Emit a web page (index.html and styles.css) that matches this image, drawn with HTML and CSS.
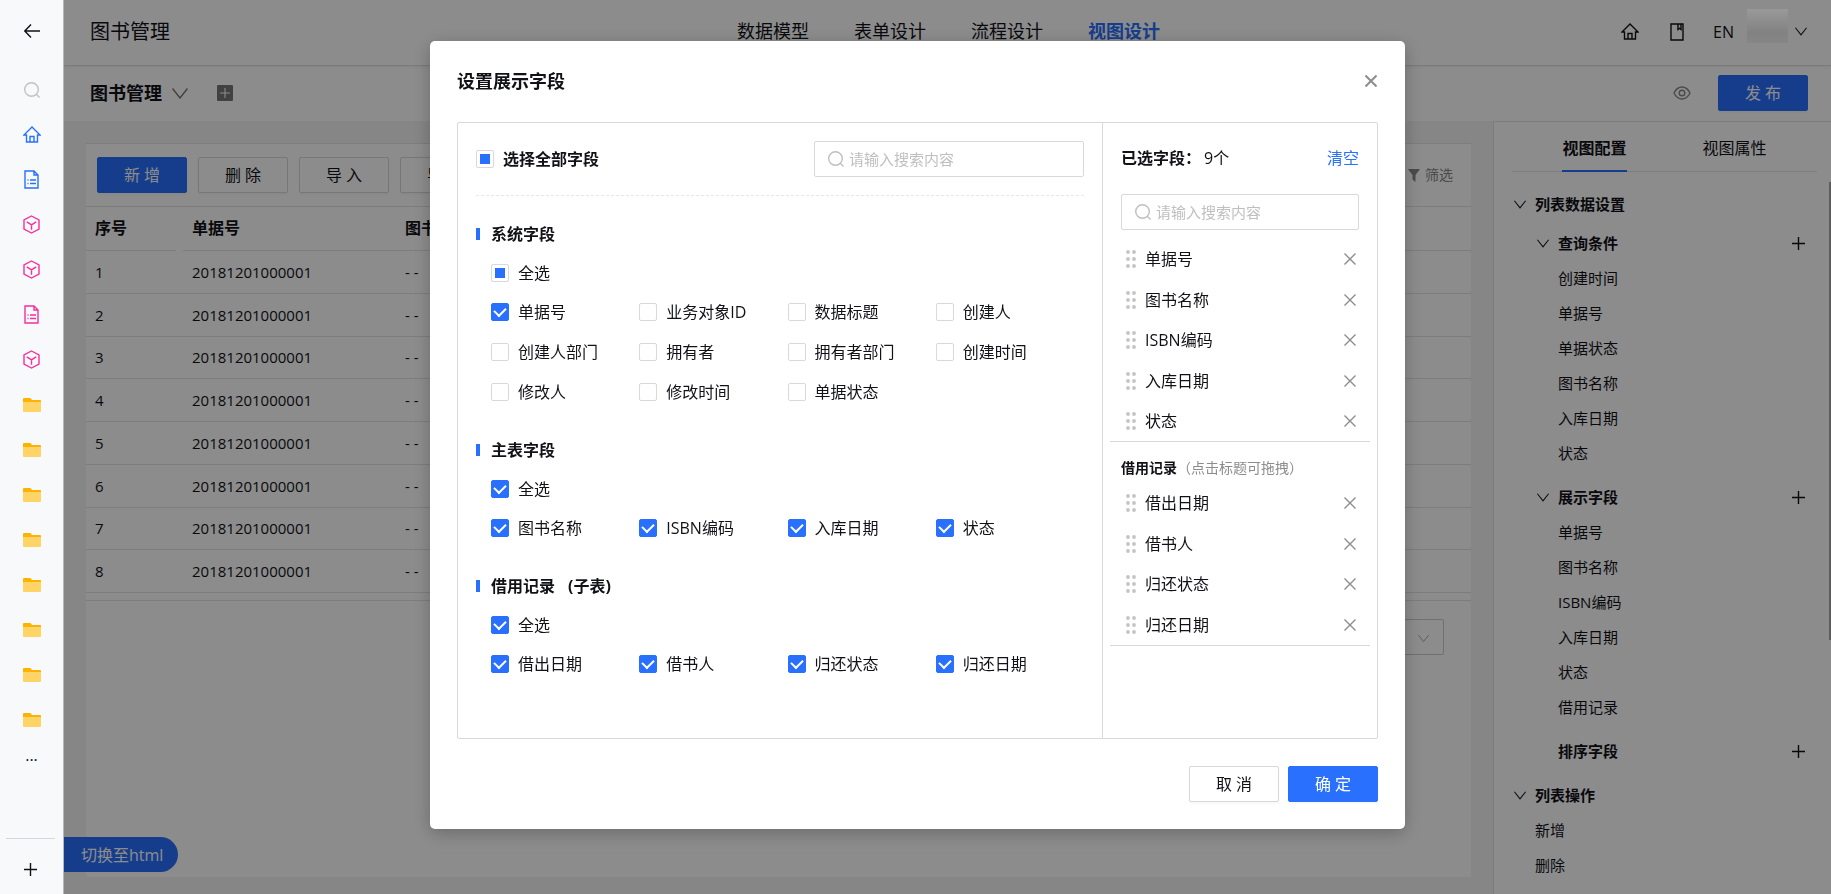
FILE: index.html
```
<!DOCTYPE html>
<html lang="zh-CN">
<head>
    <meta charset="UTF-8">
    <meta name="viewport" content="width=device-width, initial-scale=1.0">
    <title>图书管理</title>
    <link rel="stylesheet" href="styles.css">
</head>
<body>
    <svg class="symbols" aria-hidden="true">
        <symbol id="i-back" viewBox="0 0 16 14"><path d="M16 7H1M7 .5L.8 7 7 13.500"/></symbol>
        <symbol id="i-search" viewBox="0 0 16 16"><circle cx="7.500" cy="7.500" r="6.800"/><path d="M12.500 12.500l3 3"/></symbol>
        <symbol id="i-home" viewBox="0 0 18 17"><path d="M1 9l8-8 8 8h-2.500v7h-11V9zM7 16v-5.500h4V16"/></symbol>
        <symbol id="i-doc" viewBox="0 0 15 19"><path d="M1 1h9l4 4v13H1zM10 1v4h4M3.500 10h1M6 10h6M3.500 13.500h1M6 13.500h6"/></symbol>
        <symbol id="i-cube" viewBox="0 0 17 19"><path d="M8.500 1l7.500 4v9l-7.500 4L1 14V5zM3.800 6.800l4.700 3 4.700-3M8.500 9.800v5"/></symbol>
        <symbol id="i-folder" viewBox="0 0 18 14"><path d="M0 1q0-1 1-1h6.500l1.500 2h8q1 0 1 1v3H0z" fill="#ffb300" stroke="none"/><path d="M0 4h18v9q0 1-1 1H1q-1 0-1-1z" fill="#ffd466" stroke="none"/></symbol>
        <symbol id="i-plus" viewBox="0 0 13 13"><path d="M6.500 0v13M0 6.500h13"/></symbol>
        <symbol id="i-down" viewBox="0 0 16 11"><path d="M.5.500L8 10l7.500-9.500"/></symbol>
        <symbol id="i-book" viewBox="0 0 14 18"><path d="M1 1h12v16H1zM8 1v5.500l1.500-1.200L11 6.500V1"/></symbol>
        <symbol id="i-eye" viewBox="0 0 18 14"><path d="M1 7c4-8 12-8 16 0-4 8-12 8-16 0z"/><circle cx="9" cy="7" r="2.800"/></symbol>
        <symbol id="i-filter" viewBox="0 0 12 13"><path d="M0 0h12L7.500 6v7l-3-2.500V6z" fill="currentColor" stroke="none"/></symbol>
        <symbol id="i-close" viewBox="0 0 12 12"><path d="M.5.500l11 11M11.500.500l-11 11"/></symbol>
        <symbol id="i-grip" viewBox="0 0 10 18"><g fill="#c4c4c4" stroke="none"><circle cx="2" cy="2" r="1.900"/><circle cx="8" cy="2" r="1.900"/><circle cx="2" cy="9" r="1.900"/><circle cx="8" cy="9" r="1.900"/><circle cx="2" cy="16" r="1.900"/><circle cx="8" cy="16" r="1.900"/></g></symbol>
    </svg>

    <aside class="sidebar">
        <button class="side-item back" aria-label="返回"><svg width="16" height="14"><use href="#i-back"/></svg></button>
        <button class="side-item find" aria-label="搜索"><svg width="16" height="16"><use href="#i-search"/></svg></button>
        <a href="#" class="side-item blue"><svg width="18" height="17"><use href="#i-home"/></svg></a>
        <a href="#" class="side-item blue"><svg width="15" height="19"><use href="#i-doc"/></svg></a>
        <a href="#" class="side-item pink"><svg width="17" height="19"><use href="#i-cube"/></svg></a>
        <a href="#" class="side-item pink"><svg width="17" height="19"><use href="#i-cube"/></svg></a>
        <a href="#" class="side-item pink"><svg width="15" height="19"><use href="#i-doc"/></svg></a>
        <a href="#" class="side-item pink"><svg width="17" height="19"><use href="#i-cube"/></svg></a>
        <a href="#" class="side-item"><svg width="18" height="14"><use href="#i-folder"/></svg></a>
        <a href="#" class="side-item"><svg width="18" height="14"><use href="#i-folder"/></svg></a>
        <a href="#" class="side-item"><svg width="18" height="14"><use href="#i-folder"/></svg></a>
        <a href="#" class="side-item"><svg width="18" height="14"><use href="#i-folder"/></svg></a>
        <a href="#" class="side-item"><svg width="18" height="14"><use href="#i-folder"/></svg></a>
        <a href="#" class="side-item"><svg width="18" height="14"><use href="#i-folder"/></svg></a>
        <a href="#" class="side-item"><svg width="18" height="14"><use href="#i-folder"/></svg></a>
        <a href="#" class="side-item"><svg width="18" height="14"><use href="#i-folder"/></svg></a>
        <button class="side-item more">...</button>
        <button class="side-item side-add" aria-label="添加"><svg width="13" height="13"><use href="#i-plus"/></svg></button>
    </aside>

    <div class="app">
        <header class="header">
            <h1 class="app-name">图书管理</h1>
            <nav class="nav">
                <a href="#">数据模型</a>
                <a href="#">表单设计</a>
                <a href="#">流程设计</a>
                <a href="#" class="active">视图设计</a>
            </nav>
            <div class="user">
                <svg width="18" height="17"><use href="#i-home"/></svg>
                <svg class="book" width="14" height="18"><use href="#i-book"/></svg>
                <span class="lang">EN</span>
                <span class="avatar"></span>
                <svg width="12" height="9"><use href="#i-down"/></svg>
            </div>
        </header>

        <div class="subheader">
            <h2>图书管理</h2>
            <svg class="switch" width="16" height="11"><use href="#i-down"/></svg>
            <button class="add-view" aria-label="新建视图"><svg width="10" height="10"><use href="#i-plus"/></svg></button>
            <svg class="preview" width="18" height="14"><use href="#i-eye"/></svg>
            <button class="btn primary">发 布</button>
        </div>

        <div class="workspace">
            <main class="card">
                <div class="toolbar">
                    <button class="btn primary">新 增</button>
                    <button class="btn">删 除</button>
                    <button class="btn">导 入</button>
                    <button class="btn">导 出</button>
                    <span class="filter"><svg width="12" height="13"><use href="#i-filter"/></svg>筛选</span>
                </div>
                <table class="grid">
                    <thead>
                        <tr><th class="col-no">序号</th><th class="col-code">单据号</th><th>图书名称</th></tr>
                    </thead>
                    <tbody>
                        <tr><td>1</td><td>20181201000001</td><td>- -</td></tr>
                        <tr><td>2</td><td>20181201000001</td><td>- -</td></tr>
                        <tr><td>3</td><td>20181201000001</td><td>- -</td></tr>
                        <tr><td>4</td><td>20181201000001</td><td>- -</td></tr>
                        <tr><td>5</td><td>20181201000001</td><td>- -</td></tr>
                        <tr><td>6</td><td>20181201000001</td><td>- -</td></tr>
                        <tr><td>7</td><td>20181201000001</td><td>- -</td></tr>
                        <tr><td>8</td><td>20181201000001</td><td>- -</td></tr>
                    </tbody>
                </table>
                <div class="pager">
                    <button class="page-size" aria-label="每页条数"><svg width="11" height="9"><use href="#i-down"/></svg></button>
                </div>
            </main>

            <section class="config">
                <div class="tabs">
                    <a href="#" class="active">视图配置</a>
                    <a href="#">视图属性</a>
                </div>
                <div class="tree">
                    <h3><svg width="12" height="9"><use href="#i-down"/></svg>列表数据设置</h3>
                    <div class="group first">
                        <h4><svg width="12" height="9"><use href="#i-down"/></svg>查询条件<button aria-label="添加"><svg width="13" height="13"><use href="#i-plus"/></svg></button></h4>
                        <ul>
                            <li>创建时间</li>
                            <li>单据号</li>
                            <li>单据状态</li>
                            <li>图书名称</li>
                            <li>入库日期</li>
                            <li>状态</li>
                        </ul>
                    </div>
                    <div class="group">
                        <h4><svg width="12" height="9"><use href="#i-down"/></svg>展示字段<button aria-label="添加"><svg width="13" height="13"><use href="#i-plus"/></svg></button></h4>
                        <ul>
                            <li>单据号</li>
                            <li>图书名称</li>
                            <li>ISBN编码</li>
                            <li>入库日期</li>
                            <li>状态</li>
                            <li>借用记录</li>
                        </ul>
                    </div>
                    <div class="group">
                        <h4 class="leaf">排序字段<button aria-label="添加"><svg width="13" height="13"><use href="#i-plus"/></svg></button></h4>
                    </div>
                    <div class="group actions">
                        <h3><svg width="12" height="9"><use href="#i-down"/></svg>列表操作</h3>
                        <ul>
                            <li>新增</li>
                            <li>删除</li>
                            <li>导入</li>
                        </ul>
                    </div>
                </div>
                <span class="scroll-thumb"></span>
            </section>
        </div>
        <button class="to-html">切换至html</button>
    </div>

    <div class="mask">
        <div class="modal" role="dialog" aria-labelledby="modal-title">
            <div class="modal-header">
                <h2 id="modal-title">设置展示字段</h2>
                <button class="icon-btn modal-close" aria-label="关闭"><svg width="12" height="12"><use href="#i-close"/></svg></button>
            </div>

            <div class="modal-body">
                <div class="fields">
                    <div class="fields-top">
                        <label class="check strong"><input type="checkbox" class="partial">选择全部字段</label>
                        <label class="search"><svg width="16" height="16"><use href="#i-search"/></svg><input type="text" placeholder="请输入搜索内容" aria-label="搜索字段"></label>
                    </div>

                    <section class="field-group">
                        <h3>系统字段</h3>
                        <label class="check all"><input type="checkbox" class="partial">全选</label>
                        <div class="options">
                            <label class="check"><input type="checkbox" checked>单据号</label>
                            <label class="check"><input type="checkbox">业务对象ID</label>
                            <label class="check"><input type="checkbox">数据标题</label>
                            <label class="check"><input type="checkbox">创建人</label>
                            <label class="check"><input type="checkbox">创建人部门</label>
                            <label class="check"><input type="checkbox">拥有者</label>
                            <label class="check"><input type="checkbox">拥有者部门</label>
                            <label class="check"><input type="checkbox">创建时间</label>
                            <label class="check"><input type="checkbox">修改人</label>
                            <label class="check"><input type="checkbox">修改时间</label>
                            <label class="check"><input type="checkbox">单据状态</label>
                        </div>
                    </section>

                    <section class="field-group">
                        <h3>主表字段</h3>
                        <label class="check all"><input type="checkbox" checked>全选</label>
                        <div class="options">
                            <label class="check"><input type="checkbox" checked>图书名称</label>
                            <label class="check"><input type="checkbox" checked>ISBN编码</label>
                            <label class="check"><input type="checkbox" checked>入库日期</label>
                            <label class="check"><input type="checkbox" checked>状态</label>
                        </div>
                    </section>

                    <section class="field-group">
                        <h3>借用记录 <span class="sub">(子表)</span></h3>
                        <label class="check all"><input type="checkbox" checked>全选</label>
                        <div class="options">
                            <label class="check"><input type="checkbox" checked>借出日期</label>
                            <label class="check"><input type="checkbox" checked>借书人</label>
                            <label class="check"><input type="checkbox" checked>归还状态</label>
                            <label class="check"><input type="checkbox" checked>归还日期</label>
                        </div>
                    </section>
                </div>

                <div class="selected">
                    <div class="selected-top">
                        <strong>已选字段：</strong>
                        <span>9个</span>
                        <a href="#">清空</a>
                    </div>
                    <label class="search"><svg width="16" height="16"><use href="#i-search"/></svg><input type="text" placeholder="请输入搜索内容" aria-label="搜索已选字段"></label>
                    <ul class="picked">
                        <li><svg width="10" height="18"><use href="#i-grip"/></svg>单据号<button class="icon-btn" aria-label="移除"><svg width="12" height="12"><use href="#i-close"/></svg></button></li>
                        <li><svg width="10" height="18"><use href="#i-grip"/></svg>图书名称<button class="icon-btn" aria-label="移除"><svg width="12" height="12"><use href="#i-close"/></svg></button></li>
                        <li><svg width="10" height="18"><use href="#i-grip"/></svg>ISBN编码<button class="icon-btn" aria-label="移除"><svg width="12" height="12"><use href="#i-close"/></svg></button></li>
                        <li><svg width="10" height="18"><use href="#i-grip"/></svg>入库日期<button class="icon-btn" aria-label="移除"><svg width="12" height="12"><use href="#i-close"/></svg></button></li>
                        <li><svg width="10" height="18"><use href="#i-grip"/></svg>状态<button class="icon-btn" aria-label="移除"><svg width="12" height="12"><use href="#i-close"/></svg></button></li>
                    </ul>
                    <p class="picked-title"><strong>借用记录</strong>（点击标题可拖拽）</p>
                    <ul class="picked">
                        <li><svg width="10" height="18"><use href="#i-grip"/></svg>借出日期<button class="icon-btn" aria-label="移除"><svg width="12" height="12"><use href="#i-close"/></svg></button></li>
                        <li><svg width="10" height="18"><use href="#i-grip"/></svg>借书人<button class="icon-btn" aria-label="移除"><svg width="12" height="12"><use href="#i-close"/></svg></button></li>
                        <li><svg width="10" height="18"><use href="#i-grip"/></svg>归还状态<button class="icon-btn" aria-label="移除"><svg width="12" height="12"><use href="#i-close"/></svg></button></li>
                        <li><svg width="10" height="18"><use href="#i-grip"/></svg>归还日期<button class="icon-btn" aria-label="移除"><svg width="12" height="12"><use href="#i-close"/></svg></button></li>
                    </ul>
                </div>
            </div>

            <div class="modal-footer">
                <button class="btn">取 消</button>
                <button class="btn primary">确 定</button>
            </div>
        </div>
    </div>

    <script>
        document.querySelectorAll(".partial").forEach(function (box) {
            box.indeterminate = true;
        });
    </script>
</body>
</html>
```
FILE: styles.css
```
* {
    box-sizing: border-box;
}
body {
    display: flex;
    height: 100vh;
    margin: 0;
    overflow: hidden;
    font-family: "Open Sans", "Noto Sans CJK SC", sans-serif;
    font-size: 16px;
    line-height: 24px;
    color: #111218;
    background-color: #f4f4f4;
}
h1, h2, h3, h4, p, ul {
    margin: 0;
    padding: 0;
}
ul {
    list-style: none;
}
a {
    color: inherit;
    text-decoration: none;
}
button, input {
    font: inherit;
    color: inherit;
}
button {
    padding: 0;
    border: none;
    background: none;
    cursor: pointer;
}
svg {
    flex: none;
    fill: none;
    stroke: currentColor;
    stroke-width: 1.4;
    overflow: visible;
}
.symbols {
    position: absolute;
    width: 0;
    height: 0;
}
.btn {
    width: 90px;
    height: 36px;
    padding-bottom: 1px;
    border: 1px solid #d9d9d9;
    border-radius: 2px;
    background-color: #fff;
    box-shadow: 0 2px 2px rgba(0, 0, 0, 0.03);
}
.btn.primary {
    color: #fff;
    border-color: #2970ff;
    background-color: #2970ff;
}

/* sidebar */
.sidebar {
    position: relative;
    z-index: 20;
    display: flex;
    flex-direction: column;
    flex: none;
    width: 64px;
    padding-top: 8px;
    background-color: #f7f9fb;
    border-right: 1px solid #b4b6b8;
}
.side-item {
    display: flex;
    align-items: center;
    justify-content: center;
    flex: none;
    height: 45px;
}
.side-item.find {
    margin-top: 14px;
    color: #c0c2c4;
}
.side-item.blue {
    color: #2970ff;
}
.side-item.pink {
    color: #f5319d;
}
.side-item.more {
    height: 26px;
}
.side-item.side-add {
    height: 56px;
    margin: auto 8px 0 6px;
    padding-top: 6px;
    border-top: 1px solid #d5d7da;
}

/* page behind the dialog */
.app {
    display: flex;
    flex-direction: column;
    flex: 1;
    min-width: 0;
}
.header {
    position: relative;
    display: grid;
    grid-template-columns: 1fr auto 1fr;
    align-items: center;
    height: 66px;
    padding: 0 24px 2px 26px;
    background-color: #fff;
    border-bottom: 1px solid #dedede;
    box-shadow: 0 1px 3px rgba(0, 0, 0, 0.06);
}
.app-name {
    font-size: 20px;
    font-weight: 400;
}
.nav {
    display: flex;
    gap: 45px;
    padding-bottom: 2px;
    font-size: 18px;
}
.nav .active {
    font-weight: 700;
    color: #2970ff;
}
.user {
    display: flex;
    align-items: center;
    justify-content: flex-end;
}
.user .book {
    margin-left: 31px;
}
.lang {
    margin-left: 29px;
}
.avatar {
    position: relative;
    z-index: 15;
    width: 41px;
    height: 34px;
    margin: 0 7px 12px 13px;
    background: linear-gradient(#999, #828282 70%, #868686);
}
.subheader {
    display: flex;
    align-items: center;
    height: 55px;
    padding: 0 23px 1px 26px;
    background-color: #fff;
}
.subheader h2 {
    font-size: 18px;
}
.switch {
    margin-left: 10px;
    color: #777;
}
.add-view {
    display: flex;
    align-items: center;
    justify-content: center;
    width: 16px;
    height: 16px;
    margin-left: 29px;
    color: #fff;
    background-color: #777;
    border-radius: 1px;
}
.preview {
    margin: 0 27px 0 auto;
    color: #888;
}
.workspace {
    display: flex;
    flex: 1;
    min-height: 0;
}
.card {
    flex: 1;
    margin: 22px 22px 17px;
    background-color: #fff;
    border-top: 1px solid #e4e4e4;
}
.toolbar {
    display: flex;
    align-items: center;
    gap: 11px;
    height: 63px;
    padding: 0 18px 0 11px;
    border-bottom: 1px solid #e4e4e4;
}
.filter {
    display: flex;
    align-items: center;
    gap: 5px;
    margin-left: auto;
    font-size: 14px;
    color: #888;
}
.grid {
    width: 100%;
    height: 386px;
    border-spacing: 0;
    table-layout: fixed;
    font-size: 15px;
}
.grid th, .grid td {
    padding: 0 9px;
    text-align: left;
    border-bottom: 1px solid #e4e4e4;
}
.grid th {
    position: relative;
    height: 44px;
    padding-bottom: 2px;
    font-size: 16px;
}
.col-no {
    width: 97px;
}
.col-code {
    width: 213px;
}
.grid .col-no::after {
    content: "";
    position: absolute;
    right: 0;
    bottom: -1px;
    width: 7px;
    height: 1px;
    background-color: #fff;
}
.pager {
    display: flex;
    justify-content: flex-end;
    margin-top: 7px;
    padding: 18px 27px 0;
    border-top: 1px solid #e4e4e4;
}
.page-size {
    width: 90px;
    height: 36px;
    padding-right: 14px;
    text-align: right;
    color: #aaa;
    border: 1px solid #ccc;
    border-radius: 2px;
}
.config {
    position: relative;
    width: 338px;
    padding: 0 14px 0 18px;
    overflow: hidden;
    background-color: #fff;
    border-top: 1px solid #e4e4e4;
    border-left: 1px solid #e4e4e4;
}
.tabs {
    display: flex;
    justify-content: center;
    gap: 76px;
    height: 50px;
    border-bottom: 1px solid #e4e4e4;
    line-height: 52px;
}
.tabs .active {
    height: 50px;
    font-weight: 700;
    border-bottom: 2px solid #2970ff;
}
.tree {
    padding-top: 15px;
    font-size: 15px;
    line-height: 35px;
}
.tree h3, .tree h4 {
    display: flex;
    align-items: center;
    gap: 9px;
    font-size: 15px;
    padding-left: 2px;
}
.tree h4 {
    padding: 0 12px 0 25px;
}
.tree h4.leaf {
    padding-left: 46px;
}
.tree h4 button {
    display: flex;
    margin-left: auto;
}
.group {
    margin-top: 9px;
}
.group.first {
    margin-top: 4px;
}
.group ul {
    padding-left: 46px;
}
.group.actions ul {
    padding-left: 23px;
}
.scroll-thumb {
    position: absolute;
    top: 60px;
    right: 0;
    width: 2px;
    height: 458px;
    background-color: #aaa;
}
.to-html {
    position: absolute;
    bottom: 22px;
    left: 64px;
    height: 35px;
    padding: 0 15px 0 17px;
    color: #fff;
    background-color: #2970ff;
    border-radius: 0 18px 18px 0;
}

/* dialog */
.mask {
    position: fixed;
    inset: 0;
    z-index: 10;
    display: flex;
    align-items: flex-start;
    justify-content: center;
    padding: 41px 0 0 4px;
    background-color: rgba(0, 0, 0, 0.45);
}
.modal {
    width: 975px;
    padding: 0 27px 27px;
    background-color: #fff;
    border-radius: 5px;
    box-shadow: 0 4px 18px rgba(0, 0, 0, 0.25);
}
.modal-header {
    display: flex;
    align-items: center;
    justify-content: space-between;
    height: 81px;
    padding-bottom: 1px;
}
.modal-header h2 {
    font-size: 18px;
}
.icon-btn {
    display: flex;
    color: #8c8c8c;
}
.modal-close {
    margin-right: 1px;
}
.modal-close svg {
    stroke-width: 2;
}
.modal-body {
    display: flex;
    min-height: 617px;
    border: 1px solid #d9d9d9;
    border-radius: 2px;
}
.fields {
    flex: 1;
    padding: 0 18px;
}
.fields-top {
    display: flex;
    align-items: center;
    justify-content: space-between;
    height: 73px;
    margin-bottom: 18px;
    border-bottom: 1px dashed #e8e8e8;
}
.search {
    display: flex;
    align-items: center;
    gap: 5px;
    width: 270px;
    height: 36px;
    padding: 0 13px;
    border: 1px solid #d9d9d9;
    border-radius: 2px;
    color: #bfbfbf;
}
.search input {
    flex: 1;
    min-width: 0;
    padding: 0;
    font-size: 15px;
    color: #111218;
    border: none;
    outline: none;
    background: none;
}
.search input::placeholder {
    color: #bfbfbf;
}
.check {
    display: flex;
    align-items: center;
    gap: 9px;
}
.check.strong {
    font-weight: 700;
}
.check input {
    display: flex;
    align-items: center;
    justify-content: center;
    appearance: none;
    width: 18px;
    height: 18px;
    margin: 0;
    border: 1px solid #d9d9d9;
    border-radius: 2px;
    background-color: #fff;
}
.check input:checked {
    border-color: #2970ff;
    background-color: #2970ff;
}
.check input:checked::after {
    content: "";
    width: 6px;
    height: 9px;
    margin-bottom: 3px;
    border: solid #fff;
    border-width: 0 2px 2px 0;
    transform: rotate(45deg);
}
.check input:indeterminate::after {
    content: "";
    width: 10px;
    height: 10px;
    background-color: #2970ff;
}
.field-group {
    margin-bottom: 18px;
}
.field-group h3 {
    display: flex;
    align-items: center;
    height: 39px;
    font-size: 16px;
}
.field-group h3::before {
    content: "";
    width: 4px;
    height: 12px;
    margin-right: 11px;
    background-color: #2970ff;
}
.field-group .sub {
    margin-left: 13px;
}
.check.all {
    height: 39px;
    margin-left: 15px;
}
.options {
    display: grid;
    grid-template-columns: repeat(4, 1fr);
    grid-auto-rows: 40px;
    margin-left: 15px;
}
.selected {
    width: 275px;
    border-left: 1px solid #d9d9d9;
}
.selected-top {
    display: flex;
    padding: 23px 18px 24px;
}
.selected-top span {
    margin-left: 3px;
}
.selected-top a {
    margin-left: auto;
    color: #2970ff;
}
.selected .search {
    width: auto;
    margin: 0 18px 9px;
}
.picked {
    margin: 0 7px;
    padding: 0 14px 0 16px;
    border-bottom: 1px solid #d9d9d9;
}
.picked li {
    display: flex;
    align-items: center;
    gap: 9px;
    height: 40px;
}
.picked li:nth-child(even) {
    height: 41px;
}
.picked .icon-btn {
    margin-left: auto;
}
.picked-title {
    padding: 14px 18px 3px;
    font-size: 14px;
    color: #8c8c8c;
}
.picked-title strong {
    color: #111218;
}
.modal-footer {
    display: flex;
    justify-content: flex-end;
    gap: 9px;
    margin-top: 27px;
}
```
